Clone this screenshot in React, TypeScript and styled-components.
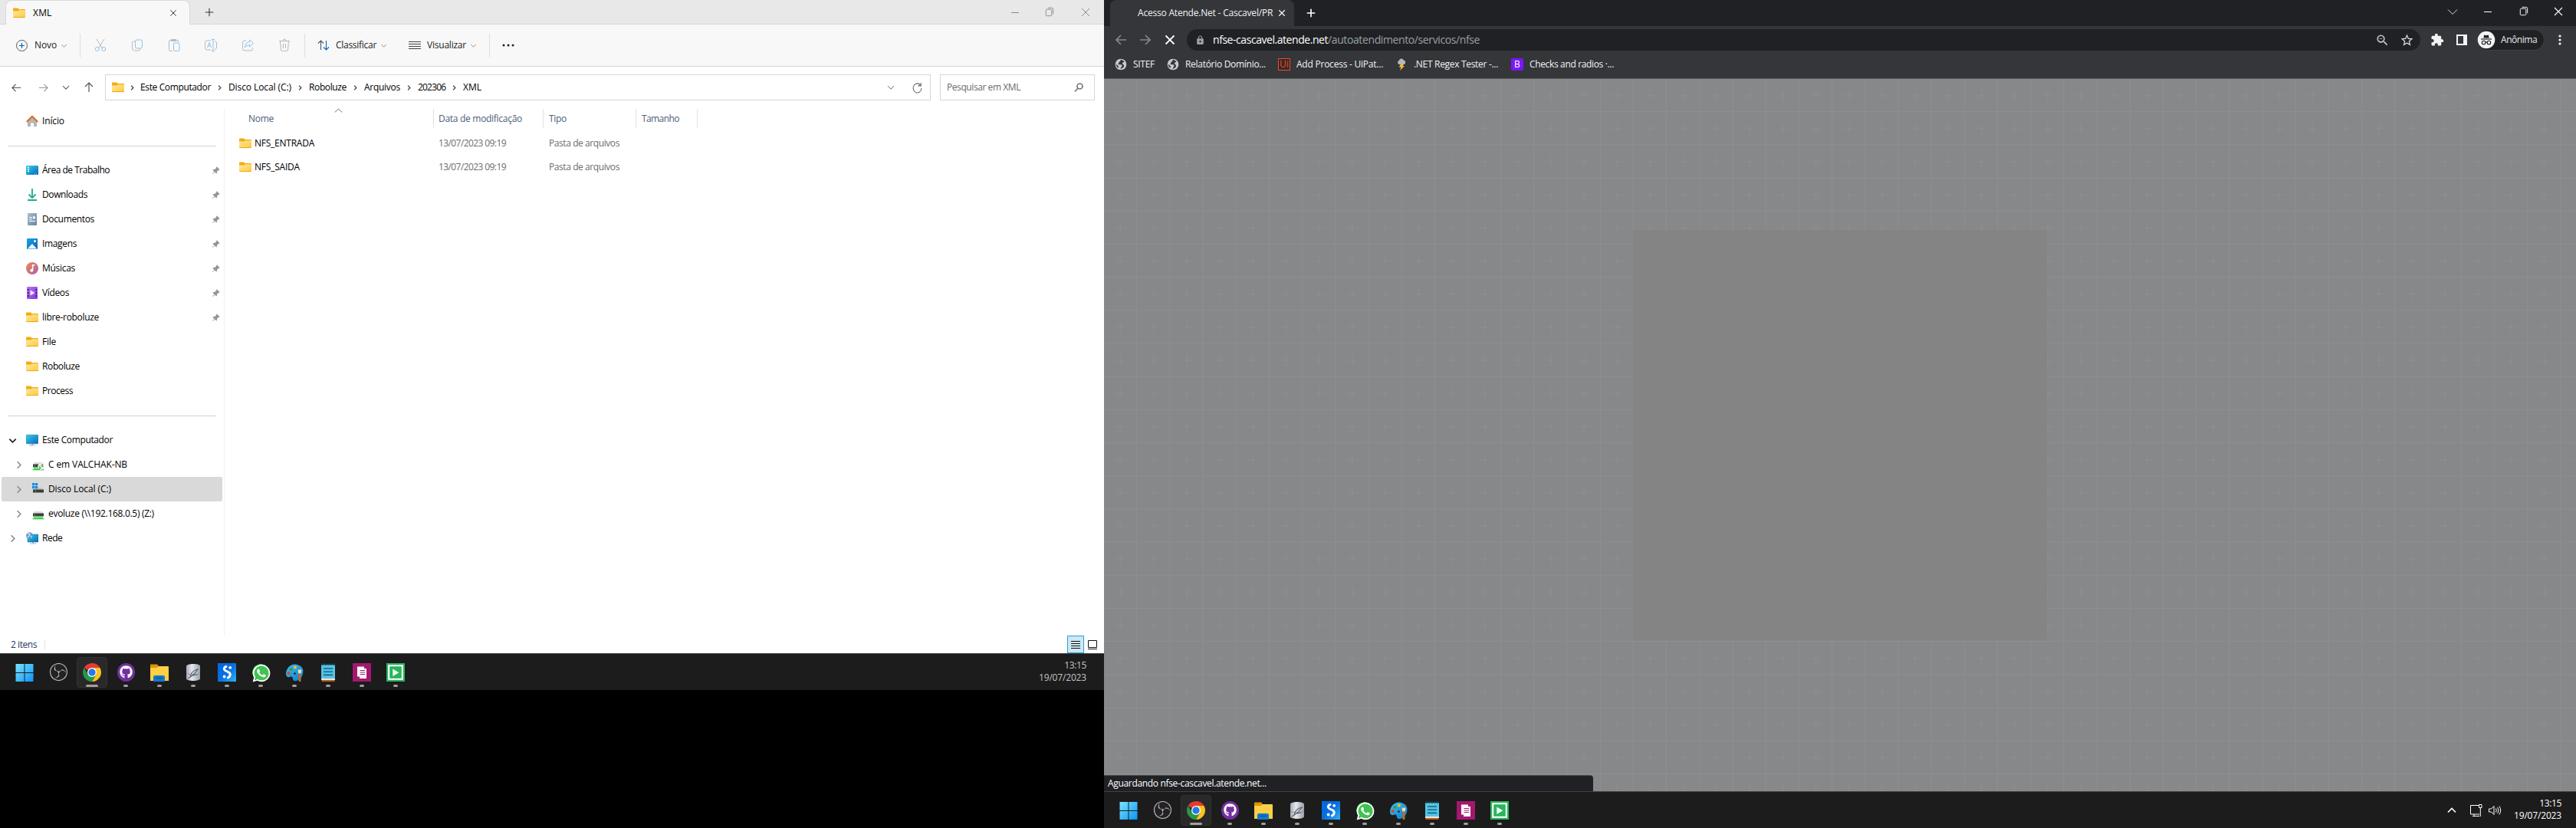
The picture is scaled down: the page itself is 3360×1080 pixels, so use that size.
import React from "react";
import styled, { createGlobalStyle } from "styled-components";
import { FaGithub, FaWhatsapp } from "react-icons/fa";
import { SiObsstudio } from "react-icons/si";
import { BsPinAngleFill } from "react-icons/bs";
import { MdExtension, MdStarBorder, MdLock, MdZoomOut } from "react-icons/md";

const Global = createGlobalStyle`
  *{box-sizing:border-box}
  body{margin:0;background:#000;font-family:"Open Sans","Noto Sans",sans-serif;font-size:12px;overflow:hidden}
  svg{display:block;flex:none}
`;

/* ---------- shared ---------- */
const Label = styled.span<{ $w?: number; $track?: number; $color?: string }>`
  display: block;
  flex: none;
  white-space: nowrap;
  line-height: 16px;
  width: ${(p) => (p.$w ? `${p.$w}px` : "auto")};
  letter-spacing: ${(p) => p.$track ?? 0}px;
  color: ${(p) => p.$color ?? "inherit"};
`;
const Slot = styled.span<{ $w: number }>`
  width: ${(p) => p.$w}px;
  flex: none;
  display: flex;
  align-items: center;
  justify-content: center;
`;
const Spacer = styled.span`
  flex: 1;
`;
const Desktop = styled.div`
  width: 3360px;
  height: 1080px;
  display: flex;
  background: #000;
`;
const Screen = styled.section<{ $w: number; $h: number }>`
  width: ${(p) => p.$w}px;
  height: ${(p) => p.$h}px;
  display: flex;
  flex-direction: column;
`;

type LineProps = { d: string; size?: number; color?: string; sw?: number; vb?: number };
const Line = ({ d, size = 16, color = "#444", sw = 1, vb = 16 }: LineProps) => (
  <svg width={size} height={size} viewBox={`0 0 ${vb} ${vb}`} fill="none" stroke={color} strokeWidth={sw}>
    <path d={d} />
  </svg>
);
const CHEV_DOWN = "M4 6.2 8 10.2 12 6.2";
const CHEV_RIGHT = "M6 4 10 8 6 12";
const CROSS = "M3 3 13 13M13 3 3 13";
const RESTORE = "M3.5 5.8a1.3 1.3 0 0 1 1.3-1.3h5.4a1.3 1.3 0 0 1 1.3 1.3v6.4a1.3 1.3 0 0 1-1.3 1.3H4.8a1.3 1.3 0 0 1-1.3-1.3zM6 2.5h5.5a2 2 0 0 1 2 2v6.5";

/* ---------- explorer icons ---------- */
const Folder = () => (
  <svg width="16" height="16" viewBox="0 0 16 16">
    <defs>
      <linearGradient id="fold" x1="0" y1="0" x2="1" y2="1">
        <stop offset="0" stopColor="#ffe9a0" />
        <stop offset="1" stopColor="#ffc83d" />
      </linearGradient>
    </defs>
    <path d="M0 2.500a1 1 0 0 1 1-1h5l1.800 1.500H15a1 1 0 0 1 1 1V8H0z" fill="#f3ad0b" />
    <path d="M0 5.500h6.500L8.200 4.200H16V13a1 1 0 0 1-1 1H1a1 1 0 0 1-1-1z" fill="url(#fold)" />
    <path d="M.3 13.600h15.400" stroke="#e5a50f" strokeWidth=".9" />
  </svg>
);
const House = () => (
  <svg width="16" height="16" viewBox="0 0 16 16">
    <path d="M2 7v8h4v-4.500h4V15h4V7L8 1.800z" fill="#b5b5b5" />
    <path d="M.8 9 8 1.600 15.200 9" fill="none" stroke="#e0661c" strokeWidth="2" strokeLinejoin="round" />
  </svg>
);
const Blue = () => (
  <defs>
    <linearGradient id="blu" x1="0" y1="0" x2="1" y2="1">
      <stop offset="0" stopColor="#32d2e4" />
      <stop offset="1" stopColor="#0a66bd" />
    </linearGradient>
  </defs>
);
const DesktopIcon = () => (
  <svg width="16" height="16" viewBox="0 0 16 16">
    <Blue />
    <rect y="2" width="16" height="12" rx="1" fill="url(#blu)" />
    <path d="M2 4.500h2M2 7h2M2 9.500h2" stroke="#fff" strokeWidth="1.300" />
    <path d="M11 13h1M13 13h1" stroke="#bde" strokeWidth="1" />
  </svg>
);
const Download = () => (
  <svg width="16" height="16" viewBox="0 0 16 16" fill="none" stroke="#21ab8e" strokeWidth="1.800">
    <path d="M8 0v12M3.500 7.500 8 12l4.500-4.500M2 15h12" />
  </svg>
);
const Doc = () => (
  <svg width="16" height="16" viewBox="0 0 16 16">
    <defs>
      <linearGradient id="dc" x1="0" y1="0" x2="1" y2="1">
        <stop offset="0" stopColor="#a8bed2" />
        <stop offset="1" stopColor="#6585a4" />
      </linearGradient>
    </defs>
    <rect x="2" width="12" height="16" rx="1" fill="url(#dc)" />
    <path d="M4 5.500h4M4 8h4M4 10.500h8M9.500 5.500H12" stroke="#fff" strokeWidth="1.200" />
    <rect x="9" y="4.300" width="3" height="3" fill="#fff" />
  </svg>
);
const Picture = () => (
  <svg width="16" height="16" viewBox="0 0 16 16">
    <defs>
      <linearGradient id="pic" x1="0" y1="0" x2="1" y2="1">
        <stop offset="0" stopColor="#1ba4e8" />
        <stop offset="1" stopColor="#0a62b8" />
      </linearGradient>
    </defs>
    <rect x="1" y="1" width="14" height="14" rx="1" fill="url(#pic)" />
    <path d="M1.800 14.500 8 8l6.200 6.500z" fill="#eef6fd" />
    <circle cx="11.500" cy="4.500" r="1.500" fill="#fff" />
  </svg>
);
const Music = () => (
  <svg width="16" height="16" viewBox="0 0 16 16">
    <defs>
      <linearGradient id="mus" x1="0" y1="0" x2="1" y2="1">
        <stop offset="0" stopColor="#f08a4b" />
        <stop offset="1" stopColor="#a561b5" />
      </linearGradient>
    </defs>
    <circle cx="8" cy="8" r="8" fill="url(#mus)" />
    <path d="M8.600 10.500V3.800h2.800" fill="none" stroke="#fff" strokeWidth="1.600" />
    <circle cx="7.300" cy="10.800" r="2" fill="#fff" />
  </svg>
);
const Video = () => (
  <svg width="16" height="16" viewBox="0 0 16 16">
    <defs>
      <linearGradient id="vid" x1="0" y1="0" x2="1" y2="1">
        <stop offset="0" stopColor="#b472f4" />
        <stop offset="1" stopColor="#8438dc" />
      </linearGradient>
    </defs>
    <rect x="1" width="14" height="16" rx="1" fill="url(#vid)" />
    <path d="M2.800 3v11M13.200 3v11" stroke="#3b1670" strokeWidth="1.600" strokeDasharray="2 2" />
    <path d="M5.500 4.500v7L11.500 8z" fill="#eee" />
  </svg>
);
const Monitor = () => (
  <svg width="16" height="16" viewBox="0 0 16 16">
    <Blue />
    <rect x=".2" y="1.200" width="15.600" height="11.600" rx=".8" fill="url(#blu)" stroke="#0f6ba8" strokeWidth=".5" />
    <path d="M7 13h2v1.500H7z" fill="#999" />
    <path d="M4 15h8" stroke="#aab4bc" />
  </svg>
);
const NetDrive = ({ linked }: { linked?: boolean }) => (
  <svg width="16" height="16" viewBox="0 0 16 16">
    <path d="M3 5h10l2 3H1z" fill="#dcdcdc" />
    <rect x="1" y="7.500" width="14" height="4" fill="#3d3d3d" />
    <rect x="2.600" y="9" width="1.200" height="1.200" fill="#4be04b" />
    <rect x="2" y="11.500" width="12" height="3.500" fill="#5fea6b" />
    <path d="M.5 14.800h15" stroke="#2fae45" strokeWidth="1" />
    {linked && (
      <>
        <circle cx="11.500" cy="10.500" r="4.300" fill="#eee" />
        <path d="M8.800 10.500 10.800 12.300 8.800 14M14.200 7.500 12.200 9.200 14.200 11" stroke="#48a52c" fill="none" strokeWidth="1.300" />
      </>
    )}
  </svg>
);
const LocalDrive = () => (
  <svg width="16" height="16" viewBox="0 0 16 16">
    <path d="M4 6h9l2 3H2z" fill="#c4c4c4" />
    <path d="M0 0h3.300v3.300H0zM3.900 0h3.300v3.300H3.900zM0 3.900h3.300v3.300H0zM3.900 3.900h3.300v3.300H3.900z" fill="#148be0" />
    <rect x="1" y="8.500" width="14" height="4" rx=".4" fill="#3d3d3d" />
    <rect x="3.800" y="10" width="1.200" height="1.200" fill="#4be04b" />
  </svg>
);
const Network = () => (
  <svg width="16" height="16" viewBox="0 0 16 16">
    <Blue />
    <rect x="2" y="3" width="14" height="10" rx=".6" fill="url(#blu)" stroke="#0f6ba8" strokeWidth=".5" />
    <path d="M8 13h2v1.500H8z" fill="#999" />
    <path d="M5 15h8" stroke="#aab4bc" />
    <circle cx="4.500" cy="4.600" r="4.400" fill="#5d9fc9" />
    <path d="M1.800 2.400c1.500-1.200 3-.6 3.200.8S3 5.200 2.200 6.600M6 5.500l1.800 1" stroke="#d6ecf7" fill="none" strokeWidth="1.300" />
  </svg>
);

/* ---------- taskbar icons ---------- */
const Svg24 = ({ children }: { children: React.ReactNode }) => (
  <svg width="24" height="24" viewBox="0 0 24 24">{children}</svg>
);
const WinLogo = () => (
  <Svg24>
    <defs>
      <linearGradient id="win" x1="0" y1="0" x2="24" y2="24" gradientUnits="userSpaceOnUse">
        <stop offset="0" stopColor="#7ee7ff" />
        <stop offset="1" stopColor="#0a93f7" />
      </linearGradient>
    </defs>
    <path d="M.5 1h11v11H.500zM12.500 1h11v11h-11zM.5 13h11v11H.500zM12.500 13h11v11h-11z" fill="url(#win)" />
  </Svg24>
);
const ObsWrap = styled.span`
  width: 24px;
  height: 24px;
  border-radius: 50%;
  background: #242224;
  display: grid;
  place-items: center;
  color: #c4c2c4;
`;
const Chrome = () => (
  <Svg24>
    <path d="M12 12 1.610 6A12 12 0 0 1 22.390 6z" fill="#e33b2e" />
    <path d="M12 0A12 12 0 0 1 22.390 6H12z" fill="#e33b2e" />
    <path d="M22.390 6A12 12 0 0 1 12 24L17.200 15 12 6z" fill="#fcc31e" />
    <path d="M1.610 6A12 12 0 0 0 12 24l5.200-9H6.800z" fill="#279847" />
    <circle cx="12" cy="12" r="6" fill="#fff" />
    <circle cx="12" cy="12" r="4.700" fill="#2a78e8" />
  </Svg24>
);
const GithubWrap = styled.span`
  width: 23px;
  height: 24px;
  border-radius: 50%;
  background: #73309f;
  display: grid;
  place-items: center;
  color: #fff;
`;
const Explorer = () => (
  <Svg24>
    <path d="M0 2.500a1 1 0 0 1 1-1h8L11 4v4H0z" fill="#dc9405" />
    <path d="M0 6h9l1.500-2H23a1 1 0 0 1 1 1v18H0z" fill="#ffcf45" />
    <path d="M4 24v-6a2 2 0 0 1 2-2h11a2 2 0 0 1 2 2v6z" fill="#1379cf" />
    <path d="M7.500 19.500h8" stroke="#0a5195" strokeWidth="1.500" />
  </Svg24>
);
const Database = () => (
  <Svg24>
    <defs>
      <linearGradient id="dbg" x1="0" y1="0" x2="1" y2="0">
        <stop offset="0" stopColor="#a2a8b4" />
        <stop offset=".4" stopColor="#e6e8ee" />
        <stop offset="1" stopColor="#989eac" />
      </linearGradient>
    </defs>
    <path d="M3 4c0-4 18-4 18 0v16c0 4-18 4-18 0z" fill="url(#dbg)" />
    <path d="M3.200 13c3 2.500 14 2.500 17.600 0" fill="none" stroke="#8a909c" />
    <path d="M5 20C9 18 14 14 18 8c-5 1-9 5-10 10M11 16l6-1" fill="none" stroke="#555b66" strokeWidth="1.100" />
  </Svg24>
);
const BlueS = () => (
  <Svg24>
    <defs>
      <linearGradient id="bs" x1="0" y1="0" x2="1" y2="1">
        <stop offset="0" stopColor="#0068e4" />
        <stop offset=".5" stopColor="#0a6ee0" />
        <stop offset="1" stopColor="#30b4f4" />
      </linearGradient>
    </defs>
    <rect width="24" height="24" fill="url(#bs)" />
    <path d="M11 4.500c-3 .5-3.500 4-1 5.200l4.500 2.300c3 1.800 2 5.500-1.200 7" fill="none" stroke="#fff" strokeWidth="2.900" strokeLinecap="round" />
    <circle cx="16.200" cy="5.800" r="1.900" fill="#fff" />
    <circle cx="8.600" cy="17.500" r="1.900" fill="#fff" />
  </Svg24>
);
const WhatsWrap = styled.span`
  width: 24px;
  height: 24px;
  display: grid;
  place-items: center;
  color: #fff;
  background: radial-gradient(circle at 12px 12px, #3fc351 10.5px, transparent 11px);
`;
const Paint = () => (
  <Svg24>
    <defs>
      <linearGradient id="pt" x1="0" y1="0" x2="1" y2="1">
        <stop offset="0" stopColor="#3bc0ee" />
        <stop offset="1" stopColor="#1478c8" />
      </linearGradient>
    </defs>
    <path d="M13 1.500C6 1 1 8 1 14c0 4 3 5 5 4s4 0 4 2.500 3 3.500 6 2c5-2 7.500-7 7.500-12S19 2 13 1.500z" fill="url(#pt)" />
    <circle cx="4.500" cy="13" r="2" fill="#d8472b" />
    <circle cx="7.500" cy="8" r="2" fill="#3b9c3b" />
    <circle cx="13" cy="5.500" r="2" fill="#f8c31c" />
    <circle cx="12.500" cy="13.500" r="1.300" fill="#123" />
    <path d="M16.500 8.500h5l-.8 5h-3.400z" fill="#f2dcb4" />
    <path d="M17.500 13.500h3V23a1.500 1.500 0 0 1-3 0z" fill="#b2702c" />
  </Svg24>
);
const Notepad = () => (
  <Svg24>
    <rect x="3" y="2" width="18" height="19" rx="1" fill="#56c3e2" />
    <path d="M3 20h18v2H3z" fill="#f2e6d8" />
    <path d="M3.500 22h17v2h-17z" fill="#b4611c" />
    <path d="M5 0v3M8.500 0v3M12 0v3M15.500 0v3M19 0v3" stroke="#174a66" strokeWidth="1.500" />
    <path d="M6 7h12M6 11.200h12M6 15.400h12" stroke="#12668f" strokeWidth="1.600" />
  </Svg24>
);
const PinkDoc = () => (
  <Svg24>
    <rect width="24" height="24" fill="#a3186f" />
    <path d="M6 4.500h9v2.500h3v13H9v-2.500H6z" fill="#fff" />
    <path d="M9.500 9.500H16M9.500 12H16M9.500 14.500H16" stroke="#a3186f" strokeWidth="1.100" />
  </Svg24>
);
const GreenPlay = () => (
  <Svg24>
    <rect width="24" height="24" fill="#29b55c" />
    <rect x="3.200" y="3.200" width="17.600" height="17.600" fill="none" stroke="#fff" strokeWidth="2" />
    <path d="M8.300 7.500v9.500l8-4.750z" fill="#fff" />
  </Svg24>
);

/* ---------- taskbar ---------- */
const Bar = styled.footer`
  height: 48px;
  flex: none;
  background: #1c1c1c;
  border-top: 1px solid #404040;
  display: flex;
  align-items: center;
  padding-left: 10px;
`;
const AppCell = styled.div<{ $active?: boolean }>`
  width: 40px;
  height: 40px;
  margin: 0 2px;
  padding-top: 7px;
  border-radius: 4px;
  display: flex;
  flex-direction: column;
  align-items: center;
  gap: 4px;
  background: ${(p) => (p.$active ? "#292929" : "transparent")};
  border: 1px solid ${(p) => (p.$active ? "#323232" : "transparent")};
`;
const Dot = styled.i<{ $w: number }>`
  width: ${(p) => p.$w}px;
  height: 3px;
  border-radius: 2px;
  background: #a3a09c;
`;
const Clock = styled.div<{ $dim?: boolean }>`
  display: flex;
  flex-direction: column;
  align-items: flex-end;
  color: ${(p) => (p.$dim ? "#c4c4c4" : "#fff")};
  padding-right: ${(p) => (p.$dim ? 23 : 19)}px;
  width: ${(p) => (p.$dim ? 100 : 94)}px;
  margin-top: -1px;
`;
const apps: { icon: React.ReactNode; dot: number; active?: boolean }[] = [
  { icon: <WinLogo />, dot: 0 },
  { icon: <ObsWrap><SiObsstudio size={23} /></ObsWrap>, dot: 0 },
  { icon: <Chrome />, dot: 16, active: true },
  { icon: <GithubWrap><FaGithub size={17} /></GithubWrap>, dot: 6 },
  { icon: <Explorer />, dot: 6 },
  { icon: <Database />, dot: 6 },
  { icon: <BlueS />, dot: 6 },
  { icon: <WhatsWrap><FaWhatsapp size={26} /></WhatsWrap>, dot: 6 },
  { icon: <Paint />, dot: 6 },
  { icon: <Notepad />, dot: 6 },
  { icon: <PinkDoc />, dot: 6 },
  { icon: <GreenPlay />, dot: 6 },
];
const Taskbar = ({ tray }: { tray?: boolean }) => (
  <Bar>
    {apps.map((a, i) => (
      <AppCell key={i} $active={a.active}>
        {a.icon}
        <Dot $w={a.dot} />
      </AppCell>
    ))}
    <Spacer />
    {tray && (
      <>
        <Slot $w={40}><Line d="M3 10.500 8 5.500 13 10.500" color="#fff" sw={1.6} /></Slot>
        <Slot $w={24}>
          <svg width="18" height="18" viewBox="0 0 18 18" fill="none" stroke="#fff">
            <path d="M12 2.500H1.500v11.500H13M6 14v2.500M4 16.500h9M12.500 1.500h3.500v4h-3.500zM14.300 6v11" />
          </svg>
        </Slot>
        <Slot $w={24}>
          <svg width="18" height="18" viewBox="0 0 18 18" fill="none" stroke="#fff">
            <path d="M1.500 7v4h3l3.500 3.500v-11L4.500 7zM10.500 6.500q1.500 2.500 0 5M12.700 5q2.600 4 0 8M14.900 3.500q3.600 5.500 0 11" />
          </svg>
        </Slot>
      </>
    )}
    <Clock $dim={!tray}>
      <Label $track={-0.35}>13:15</Label>
      <Label $track={-0.17}>19/07/2023</Label>
    </Clock>
  </Bar>
);

/* ---------- explorer ---------- */
const TitleBar = styled.header`
  height: 32px;
  flex: none;
  background: #e8e8e8;
  border-bottom: 1px solid #d6d6d6;
  display: flex;
  align-items: center;
  padding-left: 7px;
`;
const Tab = styled.div`
  width: 241px;
  height: 32px;
  margin-bottom: -1px;
  background: #f8f8f8;
  border: 1px solid #d9d9d9;
  border-bottom: 0;
  border-radius: 8px 8px 0 0;
  display: flex;
  align-items: center;
  padding: 0 15px 0 9px;
  gap: 10px;
`;
const ToolBar = styled.div`
  height: 55px;
  flex: none;
  background: #f8f8f8;
  border-bottom: 1px solid #d6d6d6;
  display: flex;
  align-items: center;
  color: #1b1b1b;
`;
const Sep = styled.i<{ $m?: string }>`
  width: 1px;
  height: 31px;
  background: #dedede;
  margin: ${(p) => p.$m ?? "0"};
`;
const ToolGroup = styled.div<{ $w: number; $pl: number }>`
  width: ${(p) => p.$w}px;
  padding-left: ${(p) => p.$pl}px;
  display: flex;
  align-items: center;
  gap: 8px;
`;
const WithChevron = styled.span`
  display: flex;
  align-items: center;
`;
const NavRow = styled.div`
  height: 54px;
  flex: none;
  display: flex;
  align-items: center;
  padding-left: 4px;
`;
const Field = styled.div<{ $w: number }>`
  width: ${(p) => p.$w}px;
  height: 34px;
  border: 1px solid #d6d6d6;
  display: flex;
  align-items: center;
  padding-left: 8px;
`;
const Body = styled.div`
  flex: 1;
  display: flex;
  min-height: 0;
`;
const Side = styled.nav`
  width: 293px;
  margin-top: 1px;
  border-right: 1px solid #f0f0f0;
  display: flex;
  flex-direction: column;
`;
const SideRow = styled.div<{ $sel?: boolean; $indent?: boolean }>`
  height: 32px;
  flex: none;
  margin: 0 2px;
  border-radius: 2px;
  background: ${(p) => (p.$sel ? "#d9d9d9" : "transparent")};
  display: flex;
  align-items: center;
  gap: 5px;
  padding-left: ${(p) => (p.$indent ? 14 : 6)}px;
  padding-right: 3px;
`;
const Caret = styled(Slot)`
  margin-right: 5px;
`;
const Rule = styled.div`
  height: 32px;
  flex: none;
  padding: 16px 10px 0;
  &::after {
    content: "";
    display: block;
    height: 1px;
    background: #d2d2d2;
  }
`;
const Table = styled.div`
  flex: 1;
  margin-top: 1px;
  display: flex;
  flex-direction: column;
`;
const HeadRow = styled.div`
  height: 29px;
  padding-left: 19px;
  display: flex;
  color: #4c607a;
`;
const HeadCell = styled.div<{ $w: number; $pl: number }>`
  position: relative;
  width: ${(p) => p.$w}px;
  height: 25px;
  padding: 5px 0 0 ${(p) => p.$pl}px;
  border-right: 1px solid #e2e2e2;
`;
const SortMark = styled.span`
  position: absolute;
  left: 122px;
  top: -5px;
`;
const FileRow = styled.div`
  height: 31px;
  padding-left: 19px;
  display: flex;
  align-items: center;
  color: #6d6d6d;
`;
const NameCell = styled.div`
  width: 260px;
  display: flex;
  align-items: center;
  gap: 4px;
  color: #000;
`;
const Status = styled.div`
  height: 23px;
  flex: none;
  display: flex;
  align-items: center;
  padding: 0 4px 0 14px;
  color: #1e395b;
`;
const StatusSep = styled.i`
  width: 1px;
  height: 12px;
  background: #e4e4e4;
`;
const ViewBtn = styled.span<{ $on?: boolean }>`
  width: 22px;
  height: 23px;
  display: grid;
  place-items: center;
  border: 1px solid ${(p) => (p.$on ? "#26a0da" : "transparent")};
  background: ${(p) => (p.$on ? "#cde8f5" : "transparent")};
`;
const ExplorerWin = styled.main`
  height: 852px;
  flex: none;
  background: #fff;
  display: flex;
  flex-direction: column;
  color: #000;
`;
const PinTint = styled.span`
  color: #8e979f;
`;

const quick: { icon: React.ReactNode; name: string; track: number; pinned?: boolean }[] = [
  { icon: <DesktopIcon />, name: "Área de Trabalho", track: -0.5, pinned: true },
  { icon: <Download />, name: "Downloads", track: -0.4, pinned: true },
  { icon: <Doc />, name: "Documentos", track: -0.35, pinned: true },
  { icon: <Picture />, name: "Imagens", track: -0.35, pinned: true },
  { icon: <Music />, name: "Músicas", track: -0.29, pinned: true },
  { icon: <Video />, name: "Vídeos", track: -0.37, pinned: true },
  { icon: <Folder />, name: "libre-roboluze", track: -0.31, pinned: true },
  { icon: <Folder />, name: "File", track: -0.25 },
  { icon: <Folder />, name: "Roboluze", track: -0.37 },
  { icon: <Folder />, name: "Process", track: -0.47 },
];
const crumbs: { name: string; w: number; track: number; gap: number }[] = [
  { name: "Este Computador", w: 92, track: -0.37, gap: 21 },
  { name: "Disco Local (C:)", w: 82, track: -0.09, gap: 23 },
  { name: "Roboluze", w: 49, track: -0.37, gap: 23 },
  { name: "Arquivos", w: 47, track: -0.27, gap: 23 },
  { name: "202306", w: 36, track: -0.8, gap: 23 },
  { name: "XML", w: 24, track: 0, gap: 23 },
];
const disabledTools: React.ReactNode[] = [
  <svg width="16" height="18" viewBox="0 0 16 18" fill="none">
    <path d="M3 1l7.500 12M13 1 5.500 13" stroke="#b9b9b9" />
    <circle cx="3.800" cy="14" r="2.500" stroke="#8fc3ea" />
    <circle cx="12.200" cy="14" r="2.500" stroke="#8fc3ea" />
  </svg>,
  <svg width="16" height="18" viewBox="0 0 16 18" fill="none">
    <rect x="5.500" y="2" width="9" height="11" rx="2" stroke="#8fc3ea" />
    <path d="M5.500 4h-2a2 2 0 0 0-2 2v7a3 3 0 0 0 3 3h5a2 2 0 0 0 2-2v-.8" stroke="#b9b9b9" />
  </svg>,
  <svg width="16" height="18" viewBox="0 0 16 18" fill="none">
    <path d="M6 16.500H3a1.500 1.500 0 0 1-1.500-1.500V4A1.500 1.500 0 0 1 3 2.500h9A1.500 1.500 0 0 1 13.500 4v1M4.500 1.500h6v2h-6z" stroke="#b9b9b9" />
    <rect x="7.500" y="6" width="7.500" height="10.500" rx="1.300" stroke="#8fc3ea" />
  </svg>,
  <svg width="18" height="18" viewBox="0 0 18 18" fill="none">
    <path d="M9.500 15H4a2.500 2.500 0 0 1-2.500-2.500v-7A2.500 2.500 0 0 1 4 3h5.500M14 3.500q2.500.5 2.500 2.500v6q0 2-2.500 2.500" stroke="#b9b9b9" />
    <path d="M4.500 12 7 5.500 9.500 12M5.300 10h3.400M12 1.500v15M10 1.500h4M10 16.500h4" stroke="#8fc3ea" />
  </svg>,
  <svg width="17" height="18" viewBox="0 0 17 18" fill="none">
    <path d="M6 3H4a2.500 2.500 0 0 0-2.500 2.500v8A2.500 2.500 0 0 0 4 16h8a2.500 2.500 0 0 0 2.500-2.500V12" stroke="#b9b9b9" />
    <path d="M10.500 2 15.500 6.500 10.500 11V8.500Q6.500 8.500 4.500 12 5 5 10.500 4.500z" stroke="#8fc3ea" />
  </svg>,
  <svg width="16" height="18" viewBox="0 0 16 18" fill="none" stroke="#b9b9b9">
    <path d="M1 3.500h14M6 3.500q0-2.500 2-2.500t2 2.500M2.500 3.500 3.500 15q.2 1.500 1.700 1.500h5.600q1.500 0 1.700-1.500L13.500 3.500M6.500 7v6M9.500 7v6" />
  </svg>,
];
const columns: { name: string; track: number; w: number; pl: number }[] = [
  { name: "Nome", track: -0.28, w: 254, pl: 12 },
  { name: "Data de modificação", track: -0.29, w: 143, pl: 6 },
  { name: "Tipo", track: -0.3, w: 121, pl: 7 },
  { name: "Tamanho", track: -0.6, w: 80, pl: 7 },
];
const files: { name: string; track: number }[] = [
  { name: "NFS_ENTRADA", track: -0.24 },
  { name: "NFS_SAIDA", track: -0.21 },
];
const Expand = () => <Line d="M6 3.500 10.500 8 6 12.500" color="#888" sw={1.6} size={15} />;

const FileExplorer = () => (
  <ExplorerWin>
    <TitleBar>
      <Tab>
        <Folder />
        <Label $track={0.2}>XML</Label>
        <Spacer />
        <Line d={CROSS} size={12} color="#333" sw={1.3} />
      </Tab>
      <Slot $w={49}><Line d="M8 2v12M2 8h12" size={14} color="#333" sw={1.2} /></Slot>
      <Spacer />
      <Slot $w={45}><Line d="M3 8.500h10" color="#8a8a8a" /></Slot>
      <Slot $w={45}><Line d={RESTORE} size={15} color="#8a8a8a" /></Slot>
      <Slot $w={49}><Line d={CROSS} color="#8a8a8a" /></Slot>
    </TitleBar>
    <ToolBar>
      <ToolGroup $w={104} $pl={20}>
        <svg width="17" height="17" viewBox="0 0 17 17" fill="none">
          <circle cx="8.500" cy="8.500" r="7" stroke="#555" />
          <path d="M8.500 5v7M5 8.500h7" stroke="#0067c0" strokeWidth="1.200" />
        </svg>
        <WithChevron>
          <Label $w={32} $track={-0.12}>Novo</Label>
          <Line d={CHEV_DOWN} size={13} color="#777" />
        </WithChevron>
      </ToolGroup>
      <Sep $m="0 2px 0 0" />
      {disabledTools.map((t, i) => <Slot key={i} $w={48}>{t}</Slot>)}
      <Sep $m="0 0 0 2px" />
      <ToolGroup $w={132} $pl={16}>
        <svg width="16" height="16" viewBox="0 0 16 16" fill="none">
          <path d="M4.500 14V2M1 5.500 4.500 2 8 5.500" stroke="#555" strokeWidth="1.100" />
          <path d="M11.500 2v12M8 10.500l3.500 3.500L15 10.500" stroke="#0067c0" strokeWidth="1.100" />
        </svg>
        <WithChevron>
          <Label $w={56} $track={-0.28}>Classificar</Label>
          <Line d={CHEV_DOWN} size={13} color="#777" />
        </WithChevron>
      </ToolGroup>
      <ToolGroup $w={108} $pl={3}>
        <Line d="M0 3.500h16M0 6.500h16M0 9.500h16M0 12.500h16" color="#444" />
        <WithChevron>
          <Label $w={54} $track={-0.22}>Visualizar</Label>
          <Line d={CHEV_DOWN} size={13} color="#777" />
        </WithChevron>
      </ToolGroup>
      <Sep />
      <Slot $w={48}>
        <svg width="16" height="4" viewBox="0 0 16 4" fill="#222">
          <circle cx="2" cy="2" r="1.500" /><circle cx="8" cy="2" r="1.500" /><circle cx="14" cy="2" r="1.500" />
        </svg>
      </Slot>
    </ToolBar>
    <NavRow>
      <Slot $w={34}><Line d="M14 8H2.500M7 3 2 8l5 5" size={15} color="#555" sw={1.2} /></Slot>
      <Slot $w={36}><Line d="M2 8h11.500M9 3l5 5-5 5" size={15} color="#999" sw={1.2} /></Slot>
      <Slot $w={24}><Line d={CHEV_DOWN} color="#666" sw={1.2} /></Slot>
      <Slot $w={35}><Line d="M8 14V2.500M3 7l5-5 5 5" color="#555" sw={1.2} /></Slot>
      <Slot $w={4} />
      <Field $w={1077}>
        <Folder />
        {crumbs.map((c) => (
          <React.Fragment key={c.name}>
            <Slot $w={c.gap}><Line d={CHEV_RIGHT} size={11} color="#444" sw={1.8} /></Slot>
            <Label $w={c.w} $track={c.track}>{c.name}</Label>
          </React.Fragment>
        ))}
        <Spacer />
        <Slot $w={34}><Line d={CHEV_DOWN} color="#666" /></Slot>
        <Slot $w={34}>
          <Line d="M12.800 5A5.700 6.500 0 1 0 13.700 8.500M13 1v4.200H9" size={15} color="#666" sw={1.1} />
        </Slot>
      </Field>
      <Slot $w={12} />
      <Field $w={202}>
        <Label $track={-0.42} $color="#6b6b6b">Pesquisar em XML</Label>
        <Spacer />
        <Slot $w={40}>
          <svg width="14" height="14" viewBox="0 0 14 14" fill="none" stroke="#777" strokeWidth="1.700">
            <circle cx="8.500" cy="5.500" r="3.500" /><path d="M6 8 2 12.500" />
          </svg>
        </Slot>
      </Field>
    </NavRow>
    <Body>
      <Side>
        <SideRow>
          <Caret $w={16} />
          <House />
          <Label $track={-0.13}>Início</Label>
        </SideRow>
        <Rule />
        {quick.map((q) => (
          <SideRow key={q.name}>
            <Caret $w={16} />
            {q.icon}
            <Label $track={q.track}>{q.name}</Label>
            <Spacer />
            {q.pinned && <PinTint><BsPinAngleFill size={11} /></PinTint>}
          </SideRow>
        ))}
        <Rule />
        <SideRow>
          <Caret $w={16}><Line d="M3.500 6 8 10.500 12.500 6" color="#222" sw={1.8} size={15} /></Caret>
          <Monitor />
          <Label $track={-0.37}>Este Computador</Label>
        </SideRow>
        <SideRow $indent>
          <Caret $w={16}><Expand /></Caret>
          <NetDrive linked />
          <Label $track={-0.11}>C em VALCHAK-NB</Label>
        </SideRow>
        <SideRow $indent $sel>
          <Caret $w={16}><Expand /></Caret>
          <LocalDrive />
          <Label $track={-0.09}>Disco Local (C:)</Label>
        </SideRow>
        <SideRow $indent>
          <Caret $w={16}><Expand /></Caret>
          <NetDrive />
          <Label $track={-0.3}>{"evoluze (\\\\192.168.0.5) (Z:)"}</Label>
        </SideRow>
        <SideRow>
          <Caret $w={16}><Expand /></Caret>
          <Network />
          <Label $track={-0.5}>Rede</Label>
        </SideRow>
      </Side>
      <Table>
        <HeadRow>
          {columns.map((c, i) => (
            <HeadCell key={c.name} $w={c.w} $pl={c.pl}>
              <Label $track={c.track}>{c.name}</Label>
              {i === 0 && <SortMark><Line d="M3 10 8 5.500 13 10" color="#666" size={15} /></SortMark>}
            </HeadCell>
          ))}
        </HeadRow>
        {files.map((f) => (
          <FileRow key={f.name}>
            <NameCell><Folder /><Label $track={f.track}>{f.name}</Label></NameCell>
            <Label $w={144} $track={-0.59}>13/07/2023 09:19</Label>
            <Label $track={-0.42}>Pasta de arquivos</Label>
          </FileRow>
        ))}
      </Table>
    </Body>
    <Status>
      <Label $w={44} $track={-0.44}>2 itens</Label>
      <StatusSep />
      <Spacer />
      <ViewBtn $on><Line d="M2 3.500h12M2 6.500h12M2 9.500h12M2 12.500h12" color="#111" /></ViewBtn>
      <ViewBtn>
        <svg width="14" height="14" viewBox="0 0 14 14" fill="none" stroke="#111">
          <path d="M1.500 1.500h11v9h-11zM1 12.500h12" />
        </svg>
      </ViewBtn>
    </Status>
  </ExplorerWin>
);

/* ---------- browser ---------- */
const TabStrip = styled.header`
  height: 34px;
  flex: none;
  background: #202124;
  display: flex;
  padding-left: 8px;
`;
const ChromeTab = styled.div`
  width: 240px;
  height: 34px;
  background: #35363a;
  border-radius: 8px 8px 0 0;
  display: flex;
  align-items: center;
  padding-left: 36px;
  color: #f1f3f4;
`;
const WinButtons = styled.div`
  height: 29px;
  display: flex;
`;
const AddressRow = styled.div`
  height: 37px;
  flex: none;
  background: #35363a;
  display: flex;
  align-items: center;
  padding: 0 2px 1px 6px;
`;
const Omnibox = styled.div`
  flex: 1;
  height: 28px;
  border-radius: 14px;
  background: #202124;
  display: flex;
  align-items: center;
  margin: 0 9px 0 6px;
  font-size: 14px;
  color: #9aa0a6;
`;
const Profile = styled.div`
  width: 89px;
  height: 28px;
  border-radius: 14px;
  border: 1px solid #3f4044;
  background: #202124;
  display: flex;
  align-items: center;
  gap: 7px;
  color: #e8eaed;
`;
const Bookmarks = styled.div`
  height: 32px;
  flex: none;
  background: #35363a;
  border-bottom: 1px solid #5a5b5e;
  display: flex;
  align-items: center;
  padding: 0 0 5px 14px;
  color: #f1f3f4;
`;
const Mark = styled.div<{ $w: number }>`
  width: ${(p) => p.$w}px;
  display: flex;
  align-items: center;
  gap: 8px;
`;
const Badge = styled.span<{ $bg: string; $fg: string; $edge?: string }>`
  width: 16px;
  height: 16px;
  flex: none;
  border-radius: ${(p) => (p.$edge ? 0 : 2)}px;
  background: ${(p) => p.$bg};
  border: 1px solid ${(p) => p.$edge ?? "transparent"};
  color: ${(p) => p.$fg};
  display: grid;
  place-items: center;
  line-height: 14px;
  font-size: 12px;
`;
const Page = styled.main`
  position: relative;
  flex: 1;
  background-color: #87888a;
  background-image: radial-gradient(ellipse 11px 1px at 50% 50%, #8e9092, transparent),
    radial-gradient(ellipse 1px 11px at 50% 50%, #8e9092, transparent),
    linear-gradient(to left, #8e8f91 1px, transparent 1px),
    linear-gradient(to top, #8e8f91 1px, transparent 1px);
  background-size: 43.2px 43.2px;
  padding: 197px 0 0 690px;
`;
const Frame = styled.div`
  width: 540px;
  height: 535px;
  background: #848484;
`;
const Bubble = styled.div`
  position: absolute;
  left: 0;
  bottom: 0;
  width: 638px;
  height: 21px;
  background: #202124;
  border-top: 1px solid #45464a;
  border-top-right-radius: 4px;
  color: #fff;
  padding: 2px 5px;
`;
const Globe = () => (
  <svg width="16" height="16" viewBox="0 0 16 16">
    <circle cx="8" cy="8" r="7.300" fill="#c8cbce" />
    <path d="M8.300 1.500c-1 1-.3 2-1.800 2.700S6 6 4.700 6.800 6 8.500 7.800 8.300s2.200 1.700 1.200 2.700-1 2.200-1.800 3.400C10 13 12.300 12 12 9.800S9.600 7.500 10 6.300s2.600-.8 2.300-2.200z" fill="#35363a" />
    <path d="M1.800 7.500 5 10.500l-.3 2.300C2.800 11.500 1.800 9.700 1.800 7.500z" fill="#35363a" />
  </svg>
);
const Incognito = () => (
  <svg width="24" height="24" viewBox="0 0 24 24">
    <circle cx="12" cy="12" r="11.300" fill="#f1f3f4" />
    <path d="M8.300 9.500 9.300 5.500l2.700.8 2.700-.8 1 4z" fill="#202124" />
    <path d="M5 11h14" stroke="#202124" strokeWidth="1.200" />
    <g fill="none" stroke="#202124" strokeWidth="1.100">
      <circle cx="8.600" cy="15.500" r="2.300" /><circle cx="15.400" cy="15.500" r="2.300" /><path d="M10.900 15.200q1.100-.7 2.200 0" />
    </g>
  </svg>
);
const Storm = () => (
  <svg width="16" height="16" viewBox="0 0 16 20">
    <path d="M7 9h5l-2 3.500h3L5.500 20 7.500 14.500H4z" fill="#f5c22d" />
    <path d="M4.500 10a3.300 3.300 0 0 1-.5-6.300 4 4 0 0 1 7.500-.7A3.600 3.600 0 0 1 12 10z" fill="#b5b8bb" />
  </svg>
);
const marks: { icon: React.ReactNode; name: string; track: number; w: number }[] = [
  { icon: <Globe />, name: "SITEF", track: -0.28, w: 68 },
  { icon: <Globe />, name: "Relatório Domínio...", track: -0.29, w: 145 },
  { icon: <Badge $bg="#332b2b" $fg="#f04a1d" $edge="#f04a1d">Ui</Badge>, name: "Add Process - UiPat...", track: -0.23, w: 153 },
  { icon: <Storm />, name: ".NET Regex Tester -...", track: -0.31, w: 151 },
  { icon: <Badge $bg="#7a16f8" $fg="#fff">B</Badge>, name: "Checks and radios ·...", track: -0.35, w: 160 },
];
const Browser = () => (
  <>
    <TabStrip>
      <ChromeTab>
        <Label $w={182} $track={-0.2}>Acesso Atende.Net - Cascavel/PR</Label>
        <Line d={CROSS} size={12} color="#f1f3f4" sw={1.8} />
      </ChromeTab>
      <Slot $w={44}><Line d="M8 2v12M2 8h12" size={14} color="#fff" sw={1.9} /></Slot>
      <Spacer />
      <WinButtons>
        <Slot $w={46}><Line d="M2 5.500 8 11.500 14 5.500" color="#ddd" /></Slot>
        <Slot $w={46}><Line d="M3 8.500h10" color="#fff" /></Slot>
        <Slot $w={46}><Line d={RESTORE} color="#fff" size={15} /></Slot>
        <Slot $w={46}><Line d={CROSS} color="#fff" sw={1.1} /></Slot>
      </WinButtons>
    </TabStrip>
    <AddressRow>
      <Slot $w={32}><Line d="M15 8H2.500M8 2 2 8l6 6" color="#85878b" sw={1.7} /></Slot>
      <Slot $w={32}><Line d="M1 8h12.500M8 2l6 6-6 6" color="#85878b" sw={1.7} /></Slot>
      <Slot $w={32}><Line d="M2.500 2.500l11 11M13.500 2.500l-11 11" color="#fff" sw={1.9} /></Slot>
      <Omnibox>
        <Slot $w={34}><MdLock size={13} /></Slot>
        <Label $track={-0.45} $color="#fff">nfse-cascavel.atende.net</Label>
        <Label $track={-0.39}>/autoatendimento/servicos/nfse</Label>
        <Spacer />
        <Slot $w={28}><MdZoomOut size={19} color="#c4c7ca" /></Slot>
        <Slot $w={36}><MdStarBorder size={19} color="#d6d8db" /></Slot>
      </Omnibox>
      <Slot $w={26}><MdExtension size={18} color="#f1f3f4" /></Slot>
      <Slot $w={38}>
        <svg width="14" height="14" viewBox="0 0 14 14"><path fillRule="evenodd" d="M0 0h14v14H0zM2 2v10h7V2z" fill="#f1f3f4" /></svg>
      </Slot>
      <Profile><Incognito /><Label $track={-0.45}>Anônima</Label></Profile>
      <Slot $w={39}>
        <svg width="4" height="14" viewBox="0 0 4 14" fill="#f1f3f4">
          <circle cx="2" cy="2" r="1.600" /><circle cx="2" cy="7" r="1.600" /><circle cx="2" cy="12" r="1.600" />
        </svg>
      </Slot>
    </AddressRow>
    <Bookmarks>
      {marks.map((m) => (
        <Mark key={m.name} $w={m.w}>{m.icon}<Label $track={m.track}>{m.name}</Label></Mark>
      ))}
    </Bookmarks>
    <Page>
      <Frame />
      <Bubble><Label $track={-0.33}>Aguardando nfse-cascavel.atende.net...</Label></Bubble>
    </Page>
  </>
);

export default function App() {
  return (
    <>
      <Global />
      <Desktop>
        <Screen $w={1440} $h={900}>
          <FileExplorer />
          <Taskbar />
        </Screen>
        <Screen $w={1920} $h={1080}>
          <Browser />
          <Taskbar tray />
        </Screen>
      </Desktop>
    </>
  );
}
